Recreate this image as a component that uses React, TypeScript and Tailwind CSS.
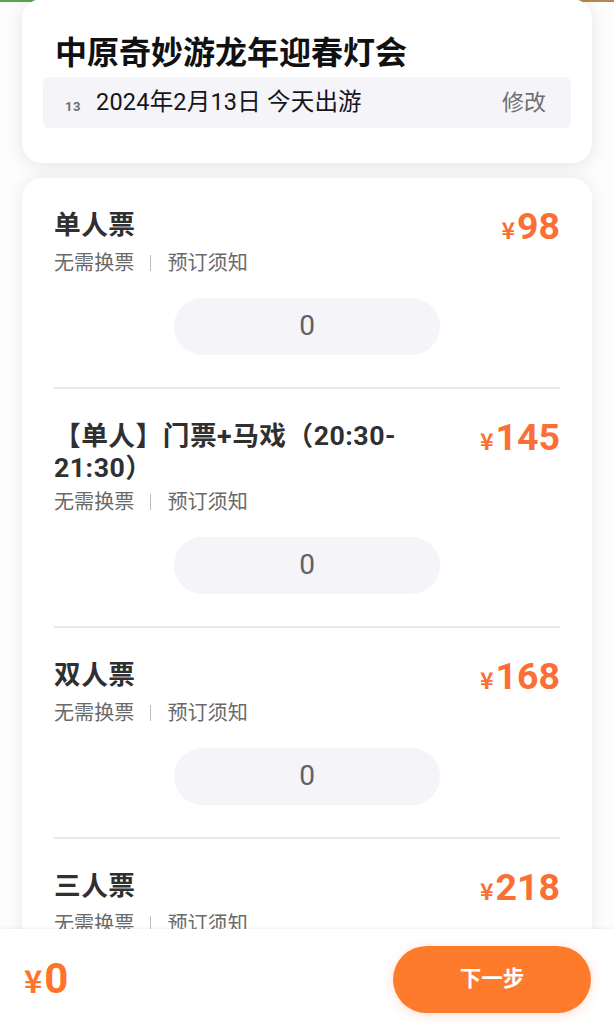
type Ticket = {
  name: string;
  price: number;
};

const tickets: Ticket[] = [
  { name: "单人票", price: 98 },
  { name: "【单人】门票+马戏（20:30-21:30）", price: 145 },
  { name: "双人票", price: 168 },
  { name: "三人票", price: 218 },
];

function TicketItem({ name, price }: Ticket) {
  return (
    <li className="border-b-2 border-[#e8e8e8] pt-8 pb-8">
      <div className="flex min-h-[35px] items-start justify-between">
        <h2 className="w-[380px] text-[26.7px] leading-[31.5px] font-bold tracking-[0.5px] text-[#303030]">
          {name}
        </h2>
        <div className="-mt-px flex h-[35px] items-baseline font-bold text-[#fb6f35]">
          <span className="font-['Noto_Sans_CJK_SC',sans-serif] text-[23px] leading-[35px]">
            ¥
          </span>
          <span className="ml-0.5 text-[37.5px] leading-[35px]">{price}</span>
        </div>
      </div>
      <div className="mt-[3px] flex h-[30px] items-center text-[20.1px] text-[#6a6a6a]">
        <span>无需换票</span>
        <span className="mx-4 h-4 w-px bg-[#bdbdbd]" />
        <span>预订须知</span>
      </div>
      <div className="mx-auto mt-5 flex h-[57px] w-[266px] items-center justify-center rounded-full bg-[#f4f4f9] pb-0.5 text-[28px] text-[#616166]">
        0
      </div>
    </li>
  );
}

export default function App() {
  return (
    <div className="flex h-[1031px] w-[614px] flex-col overflow-hidden bg-[#fdfdfd] font-['Roboto','Noto_Sans_CJK_SC',sans-serif]">
      <main className="flex min-h-0 flex-1 flex-col overflow-hidden">
        <div className="flex h-[2px] shrink-0 justify-between">
          <div className="w-1/2 bg-[#55a752]" />
          <div className="w-1/2 bg-[#b08a4c]" />
        </div>

        <section className="relative mx-[22px] -mt-[3px] h-[164px] shrink-0 rounded-[20px] bg-white px-[21px] pt-[30px] shadow-[0_2px_18px_rgba(0,0,0,0.1)]">
          <h1 className="pl-3 text-[32px] leading-[48px] font-bold text-[#111111]">
            中原奇妙游龙年迎春灯会
          </h1>
          <div className="flex h-[51px] items-center rounded-md bg-[#f4f4f9] pr-[25px] pl-[22px]">
            <span className="mt-2 w-[31px] text-[13px] font-bold tracking-[0.5px] text-[#6f6f73]">
              13
            </span>
            <span className="text-[23.5px] tracking-[0.2px] text-[#15151c]">
              2024年2月13日 今天出游
            </span>
            <span className="ml-auto text-[22px] text-[#6e6e73]">修改</span>
          </div>
        </section>

        <section className="relative mx-[22px] mt-[15px] shrink-0 rounded-[20px] bg-white px-8 shadow-[0_0_18px_rgba(0,0,0,0.08)]">
          <ul>
            {tickets.map((ticket) => (
              <TicketItem key={ticket.name} {...ticket} />
            ))}
          </ul>
        </section>
      </main>

      <footer className="relative flex h-[102px] shrink-0 items-center justify-between bg-white pr-[23px] pb-0.5 pl-6 shadow-[0_-1px_3px_rgba(0,0,0,0.06)]">
        <div className="flex items-baseline font-bold text-[#ff7428]">
          <span className="font-['Noto_Sans_CJK_SC',sans-serif] text-[31px] leading-[48px]">
            ¥
          </span>
          <span className="ml-0.5 text-[42px] leading-[48px]">0</span>
        </div>
        <button
          type="button"
          className="h-[67px] w-[198px] rounded-full bg-[#ff7b2c] text-[21.5px] font-bold text-white shadow-[0_2px_12px_rgba(255,110,60,0.22)]"
        >
          下一步
        </button>
      </footer>
    </div>
  );
}
